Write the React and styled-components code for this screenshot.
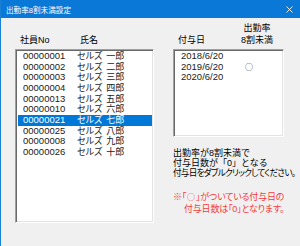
import React from 'react';
import styled, { createGlobalStyle } from 'styled-components';

const GlobalStyle = createGlobalStyle`
  html, body {
    margin: 0;
    padding: 0;
    background: #f0f0f0;
  }
  body {
    font-family: "Liberation Sans", "Noto Sans CJK JP", sans-serif;
    font-size: 9px;
    color: #000;
    font-feature-settings: "palt";
  }
`;

const Window = styled.div`
  width: 300px;
  height: 246px;
  box-sizing: border-box;
  border-left: 1px solid #1a7fd6;
  background: #f0f0f0;
  overflow: hidden;
`;

const TitleBar = styled.div`
  height: 18px;
  background: #0a78d7;
  color: #fff;
  display: flex;
  align-items: center;
  justify-content: space-between;
  padding: 0 6px 0 5px;
  font-size: 7.6px;
`;

const CloseButton = styled.svg`
  width: 7px;
  height: 7px;
  margin-right: 1px;
`;

const Body = styled.div`
  display: flex;
  gap: 19px;
  padding: 4px 0 0 14px;
`;

const Column = styled.div`
  display: flex;
  flex-direction: column;
  width: ${(p) => p.width}px;
`;

const HeaderRow = styled.div`
  height: 24px;
  margin-bottom: 3px;
  display: flex;
  align-items: flex-end;
  line-height: 12px;
`;

const HeaderCell = styled.div`
  width: ${(p) => p.width}px;
  padding-left: ${(p) => p.indent || 0}px;
  text-align: ${(p) => p.align || 'left'};
  box-sizing: border-box;
`;

const ListBox = styled.div`
  height: ${(p) => p.height}px;
  box-sizing: border-box;
  background: #fff;
  border-top: 1px solid #a0a0a0;
  border-left: 1px solid #a0a0a0;
  border-right: 1px solid #fff;
  border-bottom: 1px solid #fff;
  box-shadow: inset 1px 1px 0 #696969, inset -1px -1px 0 #e3e3e3;
  padding: 1px 1px 0 2px;
`;

const Row = styled.div`
  display: flex;
  height: 10.67px;
  line-height: 10.67px;
  white-space: nowrap;
  background: ${(p) => (p.selected ? '#0078d7' : 'transparent')};
  color: ${(p) => (p.selected ? '#fff' : '#1a1a1a')};
`;

const Cell = styled.span`
  width: ${(p) => p.width}px;
  padding-left: ${(p) => p.indent || 0}px;
  text-align: ${(p) => p.align || 'left'};
  box-sizing: border-box;
  font-size: ${(p) => (p.digits ? '9.5px' : '9px')};
`;

const Mark = styled.span`
  width: ${(p) => p.width}px;
  text-align: center;
  font-family: "Noto Sans CJK JP", sans-serif;
  font-size: 8px;
`;

const Gap = styled.span`
  display: inline-block;
  width: 4px;
`;

const Notes = styled.div`
  margin-top: 11px;
  white-space: nowrap;
`;

const NoteLine = styled.div`
  height: 10px;
  line-height: 10px;
  font-size: ${(p) => (p.tight ? '8.6px' : '9px')};
  letter-spacing: ${(p) => (p.tight ? '-0.75px' : '0')};
  font-feature-settings: ${(p) => (p.tight ? '"palt"' : 'normal')};
`;

const Warning = styled.div`
  margin-top: 13px;
  line-height: 12px;
  color: #f23c3c;
  white-space: nowrap;
  letter-spacing: -0.2px;
`;

const Circle = styled.span`
  font-family: "Noto Sans CJK JP", sans-serif;
  font-size: 8px;
  margin: 0 1px;
`;

const Indent = styled.div`
  padding-left: 11px;
`;

const employees = [
  ['00000001', '一郎'],
  ['00000002', '二郎'],
  ['00000003', '三郎'],
  ['00000004', '四郎'],
  ['00000013', '五郎'],
  ['00000010', '六郎'],
  ['00000021', '七郎'],
  ['00000025', '八郎'],
  ['00000008', '九郎'],
  ['00000026', '十郎'],
];

const grants = [
  ['2018/6/20', ''],
  ['2019/6/20', '○'],
  ['2020/6/20', ''],
];

export default function App() {
  return (
    <>
      <GlobalStyle />
      <Window>
        <TitleBar>
          <span>出勤率8割未満設定</span>
          <CloseButton viewBox="0 0 7 7">
            <path d="M0.5 0.5 L6.5 6.5 M6.5 0.5 L0.5 6.5" stroke="#fff" strokeWidth="0.9" />
          </CloseButton>
        </TitleBar>
        <Body>
          <Column width={139}>
            <HeaderRow>
              <HeaderCell width={65} indent={5}>社員No</HeaderCell>
              <HeaderCell width={60}>氏名</HeaderCell>
            </HeaderRow>
            <ListBox height={174}>
              {employees.map(([no, name], i) => (
                <Row key={no} selected={i === 6}>
                  <Cell width={59} indent={5} digits>{no}</Cell>
                  <Cell width={70}>
                    セルズ<Gap />{name}
                  </Cell>
                </Row>
              ))}
            </ListBox>
          </Column>
          <Column width={111}>
            <HeaderRow>
              <HeaderCell width={64} indent={5}>付与日</HeaderCell>
              <HeaderCell width={40} align="center">
                出勤率
                <br />
                8割未満
              </HeaderCell>
            </HeaderRow>
            <ListBox height={88}>
              {grants.map(([date, mark]) => (
                <Row key={date}>
                  <Cell width={60} indent={5} digits>{date}</Cell>
                  <Mark width={26}>{mark}</Mark>
                </Row>
              ))}
            </ListBox>
            <Notes>
              <NoteLine>出勤率が8割未満で</NoteLine>
              <NoteLine>付与日数が「0」となる</NoteLine>
              <NoteLine tight>付与日をダブルクリックしてください。</NoteLine>
            </Notes>
            <Warning>
              ※「<Circle>○</Circle>」がついている付与日の
              <Indent>付与日数は「0」となります。</Indent>
            </Warning>
          </Column>
        </Body>
      </Window>
    </>
  );
}
